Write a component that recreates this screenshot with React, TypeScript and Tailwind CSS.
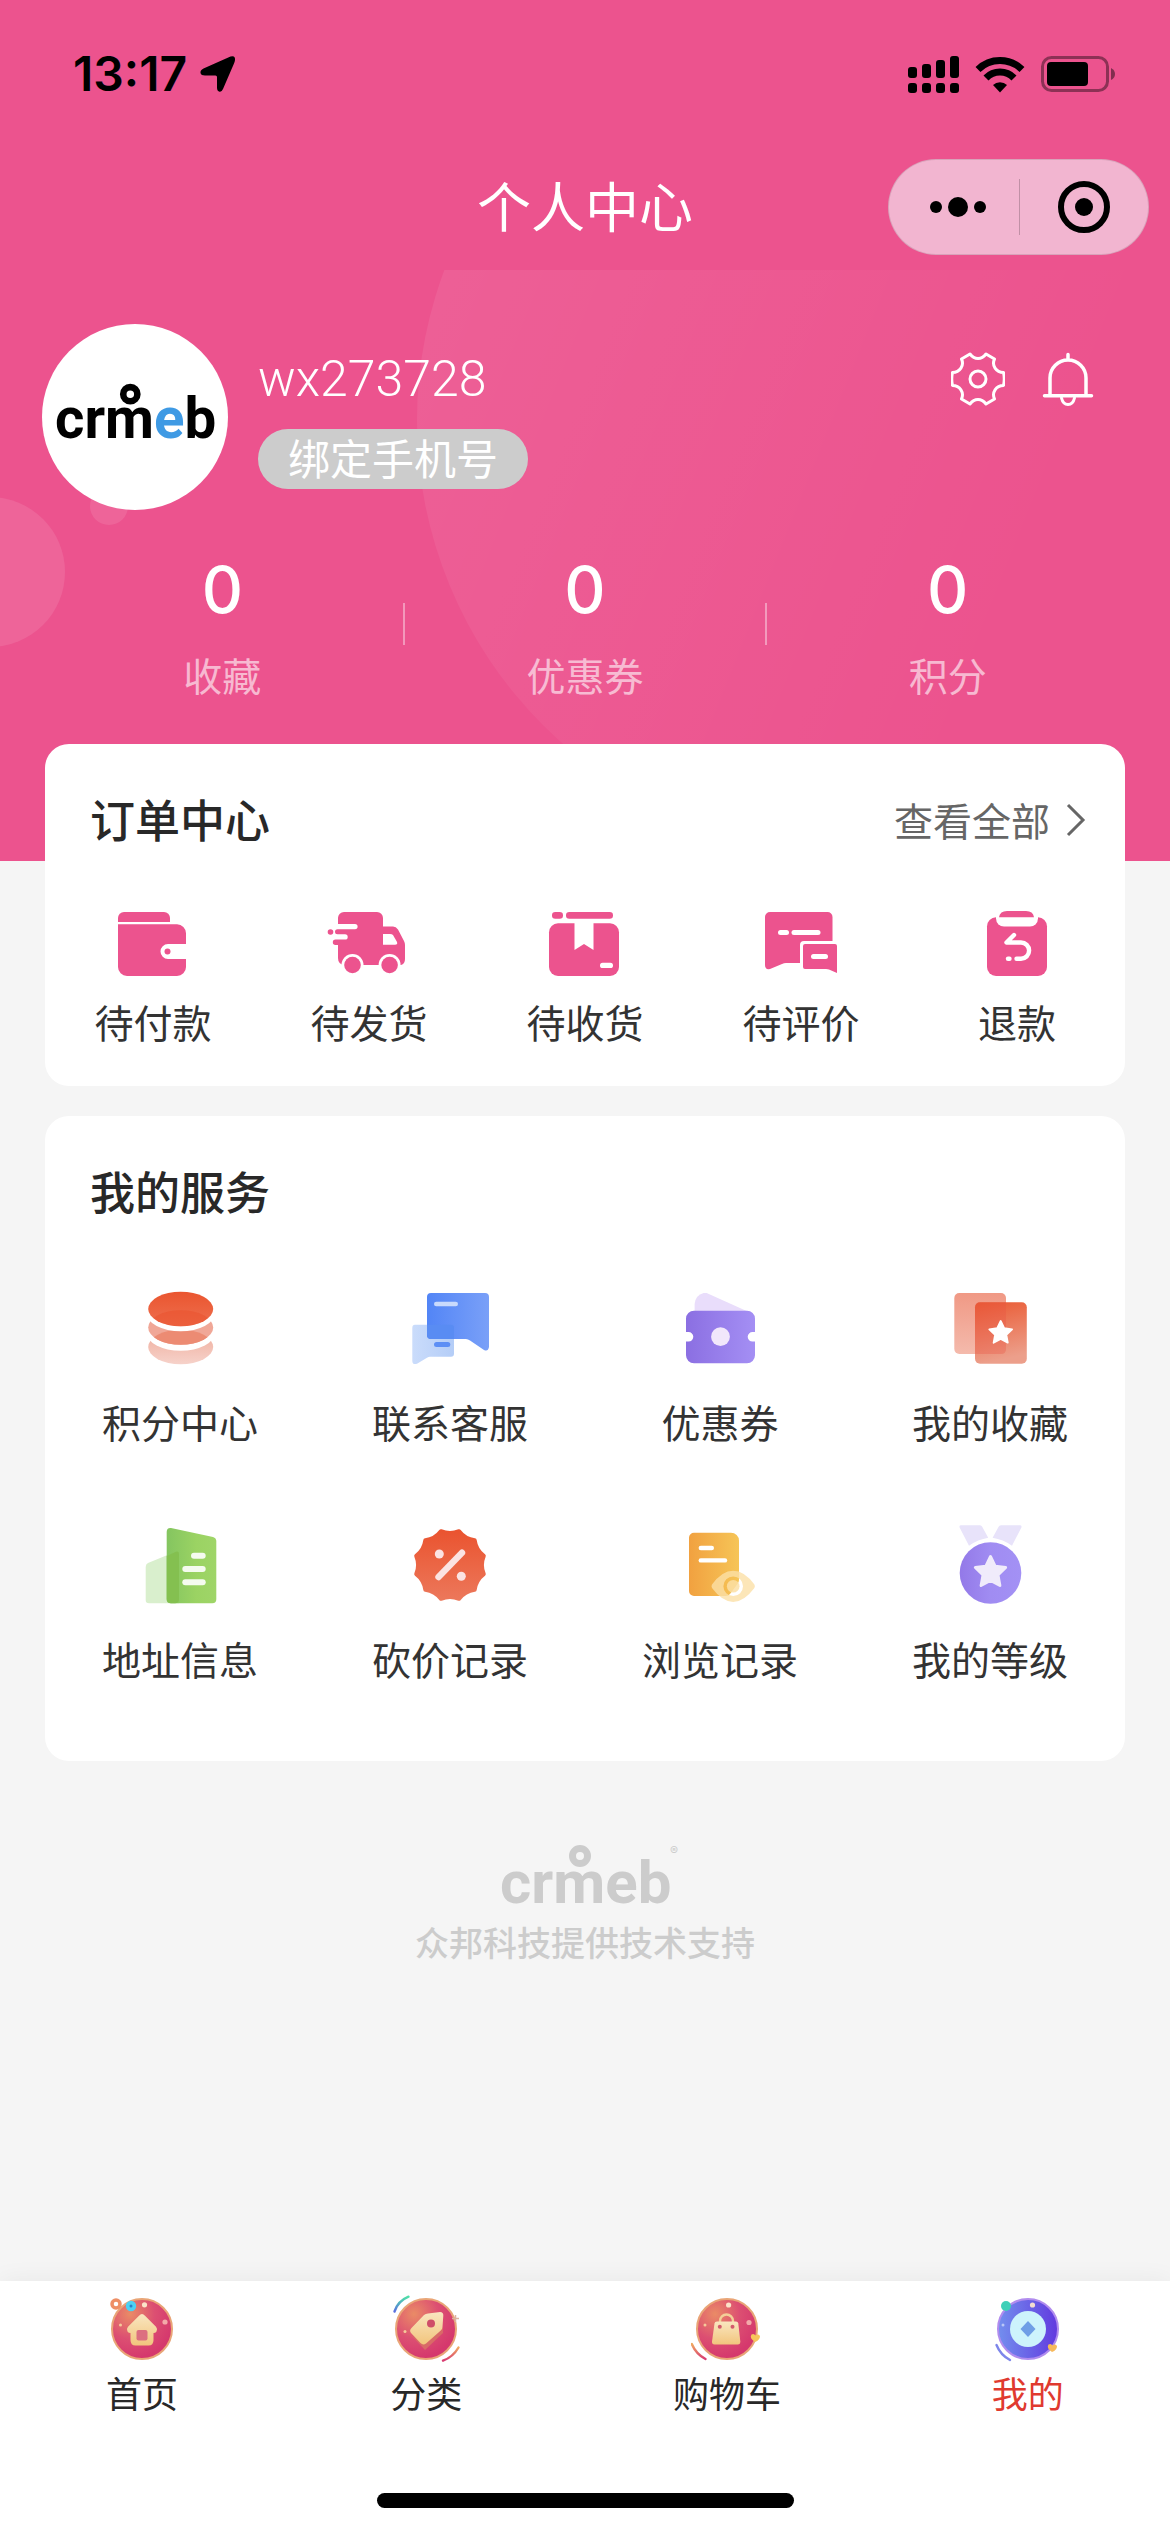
import React from 'react';

type Item = {
  label: string;
  icon: React.ReactNode;
};

const STAR = 'M0 -10 L2.9 -4 L9.5 -3.1 L4.7 1.5 L5.9 8.1 L0 5 L-5.9 8.1 L-4.7 1.5 L-9.5 -3.1 L-2.9 -4 Z';

// twelve-point badge with concave edges
const badgePath = () => {
  const at = (deg: number, r: number) => {
    const a = (deg * Math.PI) / 180;
    return `${(40 + r * Math.sin(a)).toFixed(1)} ${(40 - r * Math.cos(a)).toFixed(1)}`;
  };
  let d = `M${at(15, 35)}`;
  for (let i = 1; i <= 12; i++) {
    d += ` Q${at(i * 30, 30)} ${at(15 + i * 30, 35)}`;
  }
  return d + 'Z';
};

const orderItems: Item[] = [
  {
    label: '待付款',
    icon: (
      <>
        <path d="M7 14V10a6 6 0 0 1 6-6h40a6 6 0 0 1 6 6v4Z" />
        <path d="M7 16.300h59a9 9 0 0 1 9 9V36H57a7.500 7.500 0 0 0 0 15h18v8a9 9 0 0 1-9 9H16a9 9 0 0 1-9-9Z" />
        <circle cx="56.500" cy="43.400" r="3" />
      </>
    ),
  },
  {
    label: '待发货',
    icon: (
      <>
        <path d="M11 16V10a6 6 0 0 1 6-6h33a6 6 0 0 1 6 6v8.500h10q3 0 5 3l6 11.500q1 2 1 4V51q0 5-4 6H17q-6-1-6-7V37H8.500a2.700 2.700 0 0 1 0-5.400H18a2.700 2.700 0 0 0 0-5.400H10.500a2.500 2.500 0 0 1 0-5H28a2.600 2.600 0 0 0 0-5.200Z" />
        <circle cx="3.500" cy="24" r="2.800" />
        <path d="M56 26h7q2 0 3 1l4 7q1 2.700-2 2.700H56Z" fill="#fff" />
        <circle cx="25.500" cy="57" r="11" fill="#fff" />
        <circle cx="62.600" cy="57" r="11" fill="#fff" />
        <circle cx="25.500" cy="57" r="8.300" />
        <circle cx="62.600" cy="57" r="8.300" />
      </>
    ),
  },
  {
    label: '待收货',
    icon: (
      <>
        <rect x="9" y="4" width="11" height="6.700" rx="3.300" />
        <rect x="23" y="4" width="47" height="6.700" rx="3.300" />
        <rect x="6" y="15.300" width="70" height="52.700" rx="9" />
        <path d="M31.500 15v27l9.500-6 9.500 6V15Z" fill="#fff" />
        <rect x="57" y="54.700" width="13" height="5.300" rx="2.600" fill="#fff" />
      </>
    ),
  },
  {
    label: '待评价',
    icon: (
      <>
        <path d="M6 9a5 5 0 0 1 5-5h57.500a5 5 0 0 1 5 5v24H45q-4 0-4 4v18H27q-2 0-4 1l-12 5q-5 1-5-4Z" />
        <path d="M46 36h30q2 0 2 2v27l-8-3.500q-1-.5-3-.5H46q-2 0-2-2V38q0-2 2-2Z" />
        <g fill="#fff">
          <rect x="19" y="22" width="11" height="5" rx="2.500" />
          <rect x="32.500" y="22" width="29" height="5" rx="2.500" />
          <rect x="52" y="46" width="17" height="5" rx="2.500" />
        </g>
      </>
    ),
  },
  {
    label: '退款',
    icon: (
      <>
        <rect x="12" y="9.300" width="60" height="58.700" rx="9" />
        <rect x="21" y="1" width="42" height="17.500" rx="8" fill="#fff" />
        <path d="M24 9.300q1-6.300 8-6.300h19q7 0 8 6.300Z" />
        <g fill="none" stroke="#fff" strokeWidth="4.400" strokeLinecap="round" strokeLinejoin="round">
          <path d="M39 27l-7.500 7.500H46a8 8 0 0 1 0 16.200h-4.500" />
          <path d="M33 50.700h1.500" />
        </g>
      </>
    ),
  },
];

const serviceItems: Item[] = [
  {
    label: '积分中心',
    icon: (
      <>
        <defs>
          <linearGradient id="coinTop" x2="0" y2="1">
            <stop stopColor="#ea552f" />
            <stop offset="1" stopColor="#ee6f4f" />
          </linearGradient>
          <linearGradient id="coinLow" x2="0" y2="1">
            <stop stopColor="#efab9a" />
            <stop offset="1" stopColor="#f6d2ca" />
          </linearGradient>
          <clipPath id="coinA"><ellipse cx="40.700" cy="21" rx="32.500" ry="17.300" /></clipPath>
          <clipPath id="coinB"><ellipse cx="40.700" cy="39.500" rx="32.500" ry="17.300" /></clipPath>
        </defs>
        <ellipse cx="40.700" cy="59" rx="32.500" ry="17.300" fill="url(#coinLow)" />
        <ellipse cx="40.700" cy="45" rx="34" ry="17.800" fill="#fff" />
        <ellipse cx="40.700" cy="39.500" rx="32.500" ry="17.300" fill="#f0a797" />
        <ellipse cx="40.700" cy="59" rx="32.500" ry="17.300" fill="#ec8b73" clipPath="url(#coinB)" />
        <ellipse cx="40.700" cy="25.500" rx="34" ry="17.800" fill="#fff" />
        <ellipse cx="40.700" cy="21" rx="32.500" ry="17.300" fill="url(#coinTop)" />
        <ellipse cx="40.700" cy="39.500" rx="32.500" ry="17.300" fill="#e9502b" opacity=".5" clipPath="url(#coinA)" />
      </>
    ),
  },
  {
    label: '联系客服',
    icon: (
      <>
        <defs>
          <linearGradient id="chatBig">
            <stop stopColor="#5285f6" />
            <stop offset="1" stopColor="#7aa0f8" />
          </linearGradient>
          <linearGradient id="chatSmall">
            <stop stopColor="#cadcfb" />
            <stop offset="1" stopColor="#b4cdf7" />
          </linearGradient>
        </defs>
        <path d="M5 36.700h36q3 0 3 3v26q0 3-3 3H20q-1.500 0-3 1l-10 6q-4.700 1.500-4.700-3V40q0-3.300 2.700-3.300Z" fill="url(#chatSmall)" />
        <path d="M21 5h54q4 0 4 4v50q-1 5-5 3L60 52.500q-2-1.500-4-1.500H21q-4 0-4-4V9q0-4 4-4Z" fill="url(#chatBig)" />
        <path d="M17 36.700h24q3 0 3 3V51H21q-4 0-4-4Z" fill="#598cf3" />
        <rect x="24" y="13.700" width="24" height="4.600" rx="2.300" fill="#c9dafc" />
        <rect x="24" y="54" width="16.300" height="5" rx="2.500" fill="#5d8ff5" />
      </>
    ),
  },
  {
    label: '优惠券',
    icon: (
      <>
        <defs>
          <linearGradient id="ticket">
            <stop stopColor="#8b6fe2" />
            <stop offset="1" stopColor="#a48ff4" />
          </linearGradient>
        </defs>
        <path d="M14.600 23V16q1-9 9-11h3l40 18Z" fill="#e9ddfb" />
        <path d="M14 22.700h53a8 8 0 0 1 8 8V44h-2.500a4.800 4.800 0 0 0 0 9.600H75v13.700a8 8 0 0 1-8 8H14a8 8 0 0 1-8-8V53.600h2.500a4.800 4.800 0 0 0 0-9.600H6V30.700a8 8 0 0 1 8-8Z" fill="url(#ticket)" />
        <circle cx="40.500" cy="48.700" r="9.400" fill="#f1e7fb" />
      </>
    ),
  },
  {
    label: '我的收藏',
    icon: (
      <>
        <defs>
          <linearGradient id="favBack" x2="0" y2="1">
            <stop stopColor="#f09985" />
            <stop offset="1" stopColor="#f4baac" />
          </linearGradient>
          <linearGradient id="favFront" x2=".2" y2="1">
            <stop stopColor="#ea5a33" />
            <stop offset="1" stopColor="#ec9f8b" />
          </linearGradient>
        </defs>
        <rect x="4.300" y="5" width="51.700" height="61" rx="5" fill="url(#favBack)" />
        <rect x="25" y="14.300" width="51.800" height="61.400" rx="5" fill="url(#favFront)" />
        <path d="M25 19.300q0-5 5-5h26V61q0 5-5 5H25Z" fill="#e8503f" opacity=".3" />
        <path d={STAR} transform="translate(50.700 45) scale(1.200)" fill="#fff" stroke="#fff" strokeWidth="1.500" strokeLinejoin="round" />
      </>
    ),
  },
  {
    label: '地址信息',
    icon: (
      <>
        <defs>
          <linearGradient id="tower">
            <stop stopColor="#84c560" />
            <stop offset=".6" stopColor="#9bd363" />
            <stop offset="1" stopColor="#9fd568" />
          </linearGradient>
        </defs>
        <path d="M8 38L36 26.500q3-1 3 2V78.300H9q-3.300 0-3.300-3.300V42q0-3 2.300-4Z" fill="#d9efcd" />
        <path d="M31 3l42 9q3.300 1 3.300 4v58q0 4.300-4 4.300H31q-4.300 0-4.300-4.300V7q0-4.500 4.300-4Z" fill="url(#tower)" />
        <path d="M26.700 31L36 26.800q3-1 3 2V74q0 4.300-4 4.300h-4q-4.300 0-4.300-4.300Z" fill="#84c050" />
        <g fill="#f5fbef">
          <rect x="51" y="27.700" width="14.700" height="6" rx="3" />
          <rect x="42.300" y="41" width="23.400" height="6" rx="3" />
          <rect x="42.300" y="54.300" width="23.400" height="6" rx="3" />
        </g>
      </>
    ),
  },
  {
    label: '砍价记录',
    icon: (
      <>
        <defs>
          <linearGradient id="badge" x2="0" y2="1">
            <stop stopColor="#ea5430" />
            <stop offset="1" stopColor="#ec775a" />
          </linearGradient>
        </defs>
        <path d={badgePath()} fill="url(#badge)" stroke="url(#badge)" strokeWidth="4" strokeLinejoin="round" />
        <path d="M52 27.700L28.500 52" stroke="#fbe3e2" strokeWidth="6.400" strokeLinecap="round" />
        <circle cx="29.300" cy="29" r="4.500" fill="#fbe3e2" />
        <circle cx="51.300" cy="51.300" r="4.500" fill="#fbe3e2" />
      </>
    ),
  },
  {
    label: '浏览记录',
    icon: (
      <>
        <defs>
          <linearGradient id="doc">
            <stop stopColor="#f1a140" />
            <stop offset="1" stopColor="#f6c557" />
          </linearGradient>
        </defs>
        <path d="M14 7.700h37a8 8 0 0 1 8 8V55q0 2-1.500 4L50 69q-1.500 2-4 2H14a5 5 0 0 1-5-5V12.700a5 5 0 0 1 5-5Z" fill="url(#doc)" />
        <rect x="18.600" y="20.800" width="15.400" height="4.400" rx="2.200" fill="#fff" />
        <rect x="18.600" y="33.200" width="28.600" height="4.400" rx="2.200" fill="#fff" />
        <path
          d="M32 59.500Q42 45.700 53.200 45.700T74.400 59.500q1 1.800 0 3.600Q64 77 53.200 77T32 63.100q-1-1.800 0-3.600ZM53.200 51.500a9.800 9.800 0 1 0 0 19.600a9.800 9.800 0 1 0 0-19.600Z"
          fill="#fbe0a6"
          fillRule="evenodd"
          opacity=".8"
        />
        <circle cx="53.200" cy="61.300" r="6.300" fill="#fbdfa4" opacity=".85" />
      </>
    ),
  },
  {
    label: '我的等级',
    icon: (
      <>
        <defs>
          <linearGradient id="medal">
            <stop stopColor="#9379e8" />
            <stop offset=".5" stopColor="#a08cf2" />
            <stop offset="1" stopColor="#a391f5" />
          </linearGradient>
        </defs>
        <path d="M11 .3h19q1.500 0 2.200 1.500l6 11Q28 14.500 19 20.700L9.600 2.500Q9 .3 11 .3ZM51 .3h19q2 0 1.400 2.200L62 20.700Q53 14.500 42.600 12.800l6-11Q49.300.3 51 .3Z" fill="#e8e3fa" />
        <circle cx="40.500" cy="48" r="30.800" fill="url(#medal)" />
        <path d={STAR} transform="translate(40.500 47.500) scale(1.600)" fill="#f0ebfb" stroke="#f0ebfb" strokeWidth="1.800" strokeLinejoin="round" />
      </>
    ),
  },
];

const tabs: Item[] = [
  {
    label: '首页',
    icon: (
      <>
        <circle cx="36" cy="36" r="30" fill="url(#tabRed)" stroke="#e9a577" strokeWidth="2" />
        <path d="M36 21q1.500 0 3 1.800l11 11q2 2.500.5 4.700-1 1.500-3 1.500v7q0 5.500-5 5.500h-13q-5 0-5-5.500v-7q-2 0-3-1.500-1.500-2.200.5-4.700l11-11Q34.500 21 36 21Z" fill="url(#tabGold)" />
        <rect x="30.500" y="37" width="11" height="10.500" rx="2" fill="#dc6f80" />
        <circle cx="10" cy="11" r="4" fill="none" stroke="#ee8f66" strokeWidth="3.500" />
        <circle cx="25" cy="13" r="5.200" fill="#4ed0f2" />
        <circle cx="25" cy="13" r="1.500" fill="#2c7fc4" />
        <circle cx="38.500" cy="11.800" r="2.600" fill="#fbe3c8" />
        <circle cx="59" cy="29" r="2.600" fill="#f3a9a9" />
        <circle cx="14.500" cy="32" r="1.500" fill="#f5c99a" />
      </>
    ),
  },
  {
    label: '分类',
    icon: (
      <>
        <circle cx="36" cy="36" r="30" fill="url(#tabRed)" stroke="#e9a577" strokeWidth="2" />
        <path d="M21 42L35 57l18-17V34L34 50Z" fill="#d96a67" />
        <path d="M38 20.500l12-1.500q3.500 0 3.300 3.500L52.500 34q0 2-2 3.700L36 50.500q-3 2-5.500-.5L21 40q-2-2.500.5-5L34 22q1.800-1.500 4-1.500Z" fill="url(#tabGold)" />
        <circle cx="41" cy="30.500" r="4" fill="#cf4e69" />
        <path d="M4.500 18.500Q8 8 18.500 3.700" fill="none" stroke="url(#arcCool)" strokeWidth="2.400" strokeLinecap="round" />
        <path d="M68.500 54.500Q63 64 53 67.700" fill="none" stroke="url(#arcWarm)" strokeWidth="2.400" strokeLinecap="round" />
        <path d="M65.500 22v7M62 25.500h7" stroke="#dcb2a0" strokeWidth="1.500" />
        <circle cx="15" cy="38.500" r="1.500" fill="#f5c99a" />
      </>
    ),
  },
  {
    label: '购物车',
    icon: (
      <>
        <circle cx="36" cy="36" r="30" fill="url(#tabRed)" stroke="#e9a577" strokeWidth="2" />
        <path d="M29 30v-2a6.500 6.500 0 0 1 13 0v2" fill="none" stroke="#f3cf98" strokeWidth="2.400" />
        <path d="M26 28.500h19q2 0 2.300 2l2 18q.2 3-2.500 3H23.500q-2.700 0-2.500-3l2.500-18q.3-2 2.500-2Z" fill="url(#tabGold)" />
        <circle cx="28.800" cy="33.700" r="2" fill="#d25a6c" />
        <circle cx="41.500" cy="33.700" r="2" fill="#d25a6c" />
        <path d="M.800 51Q5 61 14.500 66" fill="none" stroke="url(#arcWarm)" strokeWidth="2.400" strokeLinecap="round" />
        <path d="M64 49q-6-4-3.500-7.500 2.500-1.500 4 1 2.500-2 4.500.5Q69 47 64 49Z" fill="#f7c65c" />
        <circle cx="37.600" cy="12" r="2.600" fill="#fbe3c8" />
        <circle cx="58" cy="29.500" r="2.600" fill="#f3a9a9" />
        <circle cx="14" cy="32" r="1.500" fill="#f5c99a" />
      </>
    ),
  },
  {
    label: '我的',
    icon: (
      <>
        <circle cx="36" cy="36" r="30" fill="url(#tabBlue)" stroke="#b18cee" strokeWidth="2" />
        <circle cx="36" cy="36" r="18" fill="#cdf3fc" />
        <path d="M36 28l7.500 8L36 44l-7.500-8Z" fill="#6f9ee6" />
        <circle cx="14" cy="13" r="5" fill="#3fd0b8" />
        <circle cx="40.500" cy="12" r="2.600" fill="#f3dcd0" />
        <circle cx="11" cy="32" r="1.500" fill="#b9c7f7" />
        <path d="M4.500 52Q8.500 62 18 67" fill="none" stroke="#7d86ea" strokeWidth="2.400" strokeLinecap="round" />
        <path d="M60 59q-6-4-3.500-7.500 2.500-1.500 4 1 2.500-2 4.500.5Q65 57 60 59Z" fill="#f7b95c" />
      </>
    ),
  },
];

const stats = [
  { label: '收藏', value: 0 },
  { label: '优惠券', value: 0 },
  { label: '积分', value: 0 },
];

function TabGradients() {
  return (
    <svg className="absolute size-0" aria-hidden="true">
      <defs>
        <radialGradient id="tabRed" cx=".3" cy=".25" r=".75">
          <stop stopColor="#ea8b66" />
          <stop offset=".55" stopColor="#dc4f72" />
          <stop offset="1" stopColor="#d5386d" />
        </radialGradient>
        <linearGradient id="tabGold" x2="0" y2="1">
          <stop stopColor="#f9e6c0" />
          <stop offset="1" stopColor="#f2c57d" />
        </linearGradient>
        <linearGradient id="tabBlue">
          <stop stopColor="#738fee" />
          <stop offset="1" stopColor="#6239df" />
        </linearGradient>
        <linearGradient id="arcCool" x2="0" y2="1">
          <stop stopColor="#4fe0a8" />
          <stop offset="1" stopColor="#5a6fe0" />
        </linearGradient>
        <linearGradient id="arcWarm" x2="0" y2="1">
          <stop stopColor="#f0a860" />
          <stop offset="1" stopColor="#d83c72" />
        </linearGradient>
      </defs>
    </svg>
  );
}

function Logo({ className, accent, mark }: { className: string; accent?: string; mark?: boolean }) {
  return (
    <svg viewBox="0 0 170 76" className={`overflow-visible ${className}`} role="img" aria-label="crmeb">
      <text x="0" y="61" fontFamily="Roboto, sans-serif" fontWeight="700" fontSize="60" fill="currentColor">
        crm<tspan fill={accent}>e</tspan>b
      </text>
      <circle cx="80" cy="14" r="7.500" fill="none" stroke="currentColor" strokeWidth="7" />
      {mark && (
        <text x="170" y="13" fontFamily="Inter, sans-serif" fontSize="12" fill="currentColor">®</text>
      )}
    </svg>
  );
}

function StatusBar() {
  return (
    <div className="flex h-[148px] items-center justify-between pl-[73px] pr-[52px] text-black">
      <div className="flex items-center gap-3">
        <span className="font-[Inter] text-[48px] leading-none font-semibold">13:17</span>
        <svg viewBox="0 0 38 38" className="size-[38px]" fill="currentColor">
          <path d="M31.500 1.500q5-1.500 4.500 3.500-.2 1.500-1 3.500L24 34q-1.500 3.500-4 2.500-2-.5-2-4V22q0-1.500-1.500-1.500H6q-4 0-4.500-2.500-.5-2.800 3-4.500Z" />
        </svg>
      </div>
      <div className="flex items-center gap-[15px]">
        <svg viewBox="0 0 52 38" className="h-[38px] w-[52px]" fill="currentColor">
          <rect x="0" y="12" width="9" height="11" rx="3" />
          <rect x="14" y="9" width="9" height="14" rx="3" />
          <rect x="28" y="5" width="9" height="18" rx="3" />
          <rect x="42" y="1" width="9" height="22" rx="3" />
          <rect x="0" y="28" width="9" height="10" rx="3" />
          <rect x="14" y="28" width="9" height="10" rx="3" />
          <rect x="28" y="28" width="9" height="10" rx="3" />
          <rect x="42" y="28" width="9" height="10" rx="3" />
        </svg>
        <svg viewBox="0 0 50 38" className="h-[38px] w-[50px]" fill="none" stroke="currentColor" strokeWidth="7">
          <path d="M3 14.500a31.500 31.500 0 0 1 44 0" />
          <path d="M11 23a19.500 19.500 0 0 1 28 0" />
          <path d="M25 37.500l-7-7.500a10 10 0 0 1 14 0Z" fill="currentColor" stroke="none" />
        </svg>
        <svg viewBox="0 0 78 38" className="h-[38px] w-[78px]">
          <rect x="2.500" y="2.500" width="65" height="33" rx="9" fill="none" stroke="#000" strokeOpacity=".4" strokeWidth="3" />
          <rect x="7" y="7" width="41" height="24" rx="4" />
          <path d="M71 13q4 2 4 6t-4 6Z" fillOpacity=".45" />
        </svg>
      </div>
    </div>
  );
}

function NavBar() {
  return (
    <div className="mb-1 grid h-[118px] grid-cols-[1fr_auto_1fr] items-center pr-[21px]">
      <span />
      <h1 className="pb-1 pl-[21px] text-[54px] leading-[72px] text-white">个人中心</h1>
      <div className="flex h-24 w-[261px] items-center justify-self-end rounded-full border border-black/10 bg-[#f2b5d0]">
        <button aria-label="更多" className="flex w-[130px] items-center justify-center gap-[6px] pl-2">
          <span className="size-3 rounded-full bg-black" />
          <span className="size-5 rounded-full bg-black" />
          <span className="size-3 rounded-full bg-black" />
        </button>
        <span className="h-14 w-px bg-black/20" />
        <button aria-label="关闭" className="flex flex-1 items-center justify-center">
          <span className="flex size-[52px] items-center justify-center rounded-full border-6 border-black">
            <span className="size-[18px] rounded-full bg-black" />
          </span>
        </button>
      </div>
    </div>
  );
}

function HeroBackdrop() {
  return (
    <svg
      viewBox="0 0 1170 591"
      preserveAspectRatio="xMidYMin slice"
      className="absolute inset-0 size-full"
      aria-hidden="true"
    >
      <defs>
        <linearGradient id="glow" x2="1" y2=".4">
          <stop offset=".05" stopColor="#fff" stopOpacity=".08" />
          <stop offset=".85" stopColor="#fff" stopOpacity="0" />
        </linearGradient>
      </defs>
      <circle cx="847" cy="151" r="430" fill="url(#glow)" />
      <circle cx="-10" cy="302" r="75" fill="#fff" fillOpacity=".1" />
      <circle cx="109" cy="236" r="19" fill="#fff" fillOpacity=".1" />
    </svg>
  );
}

function Profile() {
  return (
    <section className="relative overflow-hidden px-[42px] pt-[54px] pb-[162px] text-white">
      <HeroBackdrop />
      <div className="relative flex items-start gap-[30px]">
        <div className="flex size-[186px] items-center justify-center rounded-full bg-white text-black">
          <Logo className="w-[160px]" accent="#3f9ae4" />
        </div>
        <div className="flex flex-1 flex-col items-start gap-5 pt-[25px]">
          <p className="font-[Roboto] text-[50px] leading-[60px] font-light">wx273728</p>
          <button className="h-[60px] rounded-full bg-[#ccc] px-[30px] pb-1 text-[42px] leading-[56px]">绑定手机号</button>
        </div>
        <div className="flex gap-9 pt-7 pr-[33px]">
          <button aria-label="设置">
            <svg viewBox="0 0 54 54" className="size-[54px]" fill="none" stroke="currentColor" strokeWidth="3" strokeLinejoin="round">
              <path d="M19 2L10.500 7C13.500 13.500 9 20.500 1.500 20.500Q0 27 1.500 33.500C9 33.500 13.500 40.500 10.500 47L19 52C23.500 46 30.500 46 35 52L43.500 47C40.500 40.500 45 33.500 52.500 33.500Q54 27 52.500 20.500C45 20.500 40.500 13.500 43.500 7L35 2C30.500 8 23.500 8 19 2Z" />
              <circle cx="27" cy="27" r="8" />
            </svg>
          </button>
          <button aria-label="消息">
            <svg viewBox="0 0 54 54" className="size-[54px]" fill="none" stroke="currentColor" strokeWidth="3.500" strokeLinecap="round">
              <path d="M27 2.500V7M9 43V26a18 18 0 0 1 36 0v17M3.500 43.700h47" />
              <path d="M20.500 46q1.500 6.500 6.500 6.500t6.500-6.500" strokeWidth="3" />
            </svg>
          </button>
        </div>
      </div>

      <div className="relative mt-[35px] flex items-center">
        {stats.map((s, i) => (
          <React.Fragment key={s.label}>
            {i > 0 && <span className="mt-1 h-[42px] w-0.5 bg-white/40" />}
            <button className="flex flex-1 flex-col items-center gap-[14px]">
              <span className="font-[Inter] text-[64px] leading-[90px] font-medium">{s.value}</span>
              <span className="text-[39px] leading-[50px] text-white/60">{s.label}</span>
            </button>
          </React.Fragment>
        ))}
      </div>
    </section>
  );
}

function OrderCard() {
  return (
    <section className="rounded-3xl bg-white pt-11 pb-10">
      <div className="flex items-center justify-between pr-[39px] pl-[45px]">
        <h2 className="text-[45px] leading-[62px] font-medium text-[#282828]">订单中心</h2>
        <a href="#orders" className="flex items-center gap-4 text-[39px] leading-[62px] text-[#666]">
          查看全部
          <svg viewBox="0 0 20 36" className="h-9 w-5" fill="none" stroke="currentColor" strokeWidth="3">
            <path d="M2 4l15 15L2 34" />
          </svg>
        </a>
      </div>
      <div className="mt-[58px] grid grid-cols-5">
        {orderItems.map((item) => (
          <button key={item.label} className="flex flex-col items-center gap-4">
            <svg viewBox="0 0 84 72" className="h-[72px] w-[84px]" fill="#ec538e">{item.icon}</svg>
            <span className="text-[39px] leading-[50px] text-[#333]">{item.label}</span>
          </button>
        ))}
      </div>
    </section>
  );
}

function ServiceCard() {
  return (
    <section className="mt-[30px] rounded-3xl bg-white pt-11 pb-[78px]">
      <h2 className="pl-[45px] text-[45px] leading-[62px] font-medium text-[#282828]">我的服务</h2>
      <div className="mt-[66px] grid grid-cols-4 gap-y-[79px]">
        {serviceItems.map((item) => (
          <button key={item.label} className="flex flex-col items-center gap-7">
            <svg viewBox="0 0 80 80" className="size-20">{item.icon}</svg>
            <span className="text-[39px] leading-[50px] text-[#333]">{item.label}</span>
          </button>
        ))}
      </div>
    </section>
  );
}

function TabBar() {
  return (
    <nav className="sticky bottom-0 mt-auto bg-white pt-3 pb-6 shadow-[0_0_24px_rgba(0,0,0,0.06)]">
      <TabGradients />
      <div className="flex justify-around">
        {tabs.map((tab) => (
          <a key={tab.label} href={`#${tab.label}`} className="flex min-w-[75px] flex-col items-center gap-2">
            <svg viewBox="0 0 72 72" className="size-[72px]">{tab.icon}</svg>
            <span className={`text-[36px] leading-[38px] ${tab.label === '我的' ? 'text-[#e03a2f]' : 'text-[#282828]'}`}>
              {tab.label}
            </span>
          </a>
        ))}
      </div>
      <div className="mx-auto mt-[82px] h-[15px] w-[417px] rounded-full bg-black" />
    </nav>
  );
}

export default function App() {
  return (
    <div className="flex min-h-screen flex-col bg-[#f5f5f5] font-['Noto_Sans_CJK_SC',sans-serif]">
      <header className="bg-[#ec538e]">
        <StatusBar />
        <NavBar />
        <Profile />
      </header>
      <main className="relative -mt-[117px] px-[45px]">
        <OrderCard />
        <ServiceCard />
        <footer className="flex flex-col items-center gap-1 pt-[81px] pb-10 text-[#ccc]">
          <Logo className="w-[170px]" mark />
          <p className="text-[34px] leading-[40px] font-medium">众邦科技提供技术支持</p>
        </footer>
      </main>
      <TabBar />
    </div>
  );
}
